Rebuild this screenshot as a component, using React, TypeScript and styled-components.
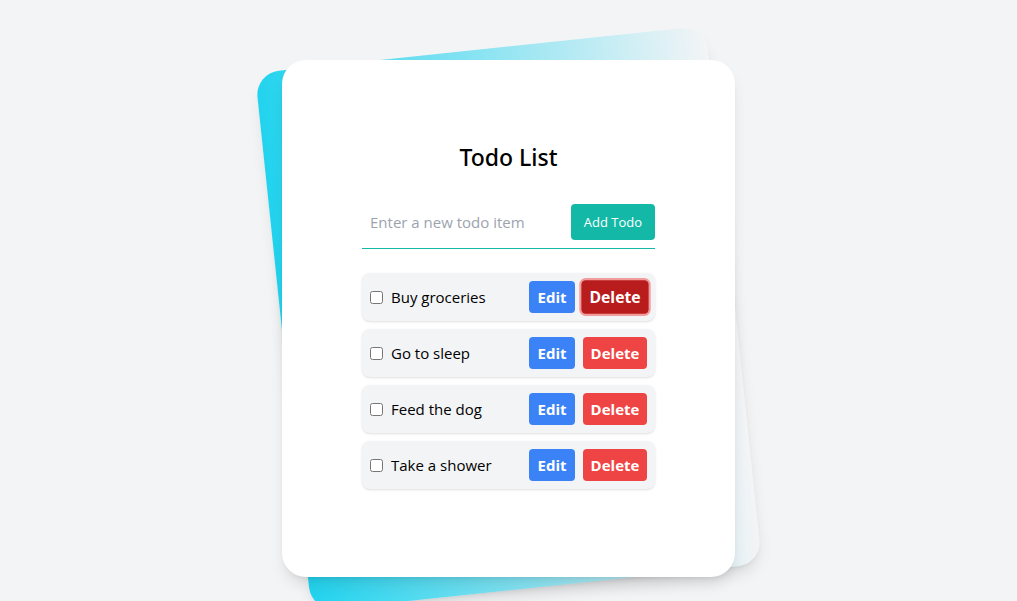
import React, { useState } from "react";
import styled, { createGlobalStyle, css } from "styled-components";

const GlobalStyle = createGlobalStyle`
  *, *::before, *::after { box-sizing: border-box; }
  body {
    margin: 0;
    background: #f3f4f6;
    color: #000;
    font-family: "Open Sans", "Noto Sans", sans-serif;
    font-size: 15px;
    line-height: 24px;
  }
  h1, ul { margin: 0; padding: 0; }
  button, input { font: inherit; color: inherit; }
`;

const Page = styled.main`
  min-height: 100vh;
  padding: 48px 0;
  display: flex;
  flex-direction: column;
  justify-content: center;
  overflow: hidden;
`;

const Stack = styled.div`
  position: relative;
  align-self: center;
  padding: 12px 0;
`;

const cardSurface = css`
  border-radius: 24px;
  box-shadow: 0 10px 15px -3px rgba(0, 0, 0, 0.1), 0 4px 6px -4px rgba(0, 0, 0, 0.1);
`;

const Backdrop = styled.div`
  ${cardSurface}
  position: absolute;
  inset: 0;
  background: linear-gradient(to right, #22d3ee, rgba(34, 211, 238, 0));
  transform: rotate(-6deg);
`;

const Card = styled.section`
  ${cardSurface}
  position: relative;
  padding: 80px;
  background: #fff;
`;

const Title = styled.h1`
  margin-bottom: 22px;
  font-family: "Noto Sans", "Open Sans", sans-serif;
  font-size: 23px;
  font-weight: 500;
  line-height: 34px;
  text-align: center;
`;

const AddForm = styled.form`
  display: flex;
  align-items: center;
  margin-bottom: 24px;
  padding: 8px 0;
  border-bottom: 1px solid #14b8a6;
`;

const TodoInput = styled.input`
  width: 197px;
  flex: 1 1 auto;
  margin-right: 12px;
  padding: 4px 8px;
  border: 0;
  outline: 0;
  background: transparent;
  &::placeholder { color: #9ca3af; opacity: 1; }
`;

const Button = styled.button`
  flex: none;
  border: 0;
  border-radius: 4px;
  color: #fff;
  cursor: pointer;
`;

const AddButton = styled(Button)`
  width: 84px;
  height: 36px;
  padding: 0;
  background: #14b8a6;
  font-size: 13px;
  line-height: 20px;
`;

const List = styled.ul`
  list-style: none;
`;

const Item = styled.li`
  display: flex;
  align-items: center;
  gap: 8px;
  margin-bottom: 8px;
  padding: 8px;
  border-radius: 8px;
  background: #f3f4f6;
  box-shadow: 0 1px 3px rgba(0, 0, 0, 0.1), 0 1px 2px -1px rgba(0, 0, 0, 0.1);
`;

const ItemLabel = styled.label`
  display: flex;
  align-items: center;
  gap: 8px;
  flex: 1;
`;

const Checkbox = styled.input`
  width: 13px;
  height: 13px;
  margin: 0;
`;

const ActionButton = styled(Button)<{ $kind: "edit" | "delete"; $active?: boolean }>`
  width: ${(p) => (p.$kind === "edit" ? 46 : 64)}px;
  height: 32px;
  padding: 0;
  background: ${(p) => (p.$kind === "edit" ? "#3b82f6" : "#ef4444")};
  font-weight: 700;
  ${(p) =>
    p.$active &&
    css`
      background: #b91c1c;
      box-shadow: 0 0 0 2px rgba(239, 68, 68, 0.5);
      transform: scale(1.05);
    `}
`;

const initialTodos = ["Buy groceries", "Go to sleep", "Feed the dog", "Take a shower"];

export default function App() {
  const [todos, setTodos] = useState(initialTodos);
  const [draft, setDraft] = useState("");

  const addTodo = (event: React.FormEvent) => {
    event.preventDefault();
    if (!draft.trim()) return;
    setTodos([...todos, draft.trim()]);
    setDraft("");
  };

  return (
    <>
      <GlobalStyle />
      <Page>
        <Stack>
          <Backdrop />
          <Card>
            <Title>Todo List</Title>
            <AddForm onSubmit={addTodo}>
              <TodoInput
                type="text"
                aria-label="New todo item"
                placeholder="Enter a new todo item"
                value={draft}
                onChange={(event) => setDraft(event.target.value)}
              />
              <AddButton type="submit">Add Todo</AddButton>
            </AddForm>
            <List>
              {todos.map((todo, index) => (
                <Item key={todo}>
                  <ItemLabel>
                    <Checkbox type="checkbox" />
                    {todo}
                  </ItemLabel>
                  <ActionButton type="button" $kind="edit">Edit</ActionButton>
                  <ActionButton
                    type="button"
                    $kind="delete"
                    $active={index === 0}
                    onClick={() => setTodos(todos.filter((t) => t !== todo))}
                  >
                    Delete
                  </ActionButton>
                </Item>
              ))}
            </List>
          </Card>
        </Stack>
      </Page>
    </>
  );
}
